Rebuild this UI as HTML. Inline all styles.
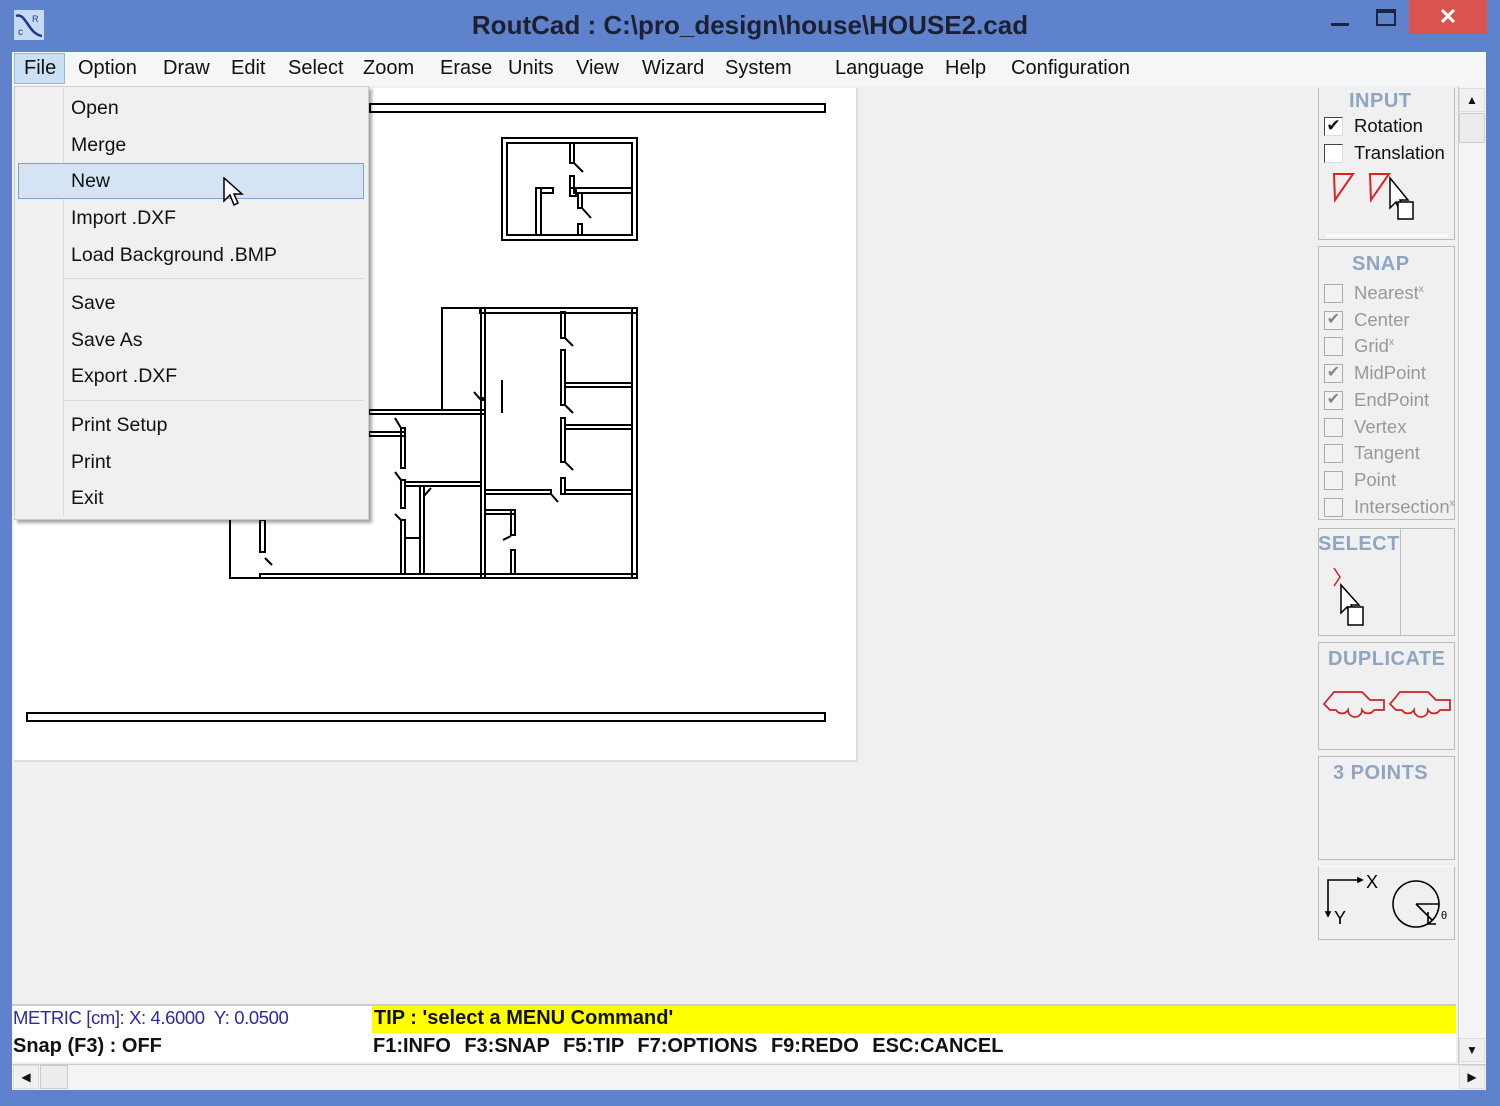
<!DOCTYPE html>
<html><head><meta charset="utf-8"><style>
*{margin:0;padding:0;box-sizing:border-box}
body{width:1500px;height:1106px;background:#5e83cc;position:relative;overflow:hidden;font-family:"Liberation Sans",sans-serif;color:#111}
.a{position:absolute}
.mb span{position:absolute;top:57px;font-size:20px;color:#111}
.mi{position:absolute;left:71px;font-size:19.5px;color:#111}
.h{position:absolute;font-weight:bold;font-size:20px;color:#8fa6c2;letter-spacing:0.5px}
.cb{position:absolute;left:1324px;width:19px;height:19px;border:1px solid #444;border-right-color:#ddd;border-bottom-color:#ddd;background:#fff}
.cb.g{border-color:#aaa;background:#f2f2f2}
.cl{position:absolute;left:1354px;font-size:18.5px}
.cl.g{color:#999}
.st{font-family:"Liberation Sans Narrow","Liberation Sans",sans-serif;font-weight:bold;font-size:20px;position:absolute}
</style></head><body>
<svg class="a" style="left:14px;top:10px" width="30" height="30" viewBox="0 0 30 30"><rect width="30" height="30" fill="#c8daf2"/><path d="M2 6 C12 2,14 24,28 26" stroke="#1b3a8a" stroke-width="2.5" fill="none"/><text x="4" y="25" font-size="10" fill="#1b3a8a" font-family="Liberation Sans">c</text><text x="18" y="12" font-size="9" fill="#1b3a8a" font-family="Liberation Sans">R</text></svg>
<div class="a" style="left:0;width:1500px;top:10px;text-align:center;font-weight:bold;font-size:26px;color:#1c2030">RoutCad : C:\pro_design\house\HOUSE2.cad</div>
<div class="a" style="left:1331px;top:23px;width:18px;height:3px;background:#1c2540"></div>
<div class="a" style="left:1376px;top:9px;width:20px;height:17px;border:2px solid #1c2540;border-top-width:4px"></div>
<div class="a" style="left:1409px;top:0;width:78px;height:34px;background:#d9534f;color:#fff;text-align:center;font-weight:bold;font-size:22px;line-height:34px">✕</div>
<div class="a" style="left:12px;top:52px;width:1474px;height:34px;background:#f5f6f7"></div>
<div class="a" style="left:14px;top:53px;width:51px;height:31px;background:#cce0f5;border:1px solid #8fb6e0"></div>
<div class="mb"><span style="left:24px">File</span><span style="left:78px">Option</span><span style="left:163px">Draw</span><span style="left:231px">Edit</span><span style="left:288px">Select</span><span style="left:363px">Zoom</span><span style="left:440px">Erase</span><span style="left:508px">Units</span><span style="left:576px">View</span><span style="left:642px">Wizard</span><span style="left:725px">System</span><span style="left:835px">Language</span><span style="left:945px">Help</span><span style="left:1011px">Configuration</span></div>
<div class="a" style="left:12px;top:86px;width:1446px;height:978px;background:#f0f0f0"></div>
<div class="a" style="left:14px;top:88px;width:844px;height:674px;background:#fff;border-right:2px solid #ddd;border-bottom:2px solid #ddd"></div>
<svg class="a" style="left:0;top:0" width="1500" height="1106" fill="none" stroke="#000" stroke-width="2">
<rect x="370" y="104" width="455" height="8" fill="#fff"/>
<rect x="27" y="713" width="798" height="8" fill="#fff"/>
<rect x="502" y="138" width="135" height="102"/><rect x="507" y="143" width="125" height="92"/>
<rect x="570" y="143" width="4" height="20"/><rect x="570" y="176" width="4" height="12"/>
<rect x="574" y="188" width="58" height="5"/><rect x="570" y="188" width="6" height="8"/>
<rect x="578" y="193" width="4" height="15"/><rect x="578" y="224" width="4" height="11"/>
<rect x="536" y="188" width="5" height="47"/><rect x="541" y="188" width="12" height="5"/>
<path d="M574 163 L583 172 M582 208 L591 218"/>
<path d="M442 410 V308 H480"/>
<rect x="480" y="308" width="157" height="5"/><rect x="632" y="308" width="5" height="270"/>
<rect x="260" y="574" width="377" height="4"/><path d="M230 520 V578 H260"/>
<rect x="369" y="410" width="116" height="4"/><rect x="369" y="432" width="36" height="4"/>
<rect x="481" y="308" width="4" height="90"/><rect x="481" y="400" width="4" height="178"/>
<path d="M502 380 V413 M474 392 L481 400"/>
<rect x="561" y="312" width="4" height="26"/><rect x="561" y="350" width="4" height="55"/><rect x="561" y="418" width="4" height="44"/><rect x="561" y="478" width="4" height="16"/>
<rect x="565" y="383" width="67" height="4"/><rect x="565" y="425" width="67" height="4"/><rect x="565" y="490" width="67" height="4"/>
<rect x="485" y="490" width="66" height="4"/>
<path d="M565 338 L573 346 M565 405 L573 413 M565 462 L573 470 M551 494 L558 502"/>
<rect x="401" y="428" width="4" height="40"/><rect x="401" y="480" width="4" height="28"/><rect x="401" y="520" width="4" height="54"/>
<rect x="405" y="482" width="76" height="4"/><rect x="420" y="486" width="4" height="88"/><path d="M405 538 H420 M395 418 L401 428 M395 472 L401 480 M395 514 L401 520 M424 496 L431 488"/>
<rect x="485" y="510" width="30" height="4"/><rect x="511" y="510" width="4" height="25"/><rect x="511" y="550" width="4" height="24"/><path d="M503 540 L511 536"/>
<rect x="260" y="520" width="5" height="32"/><path d="M265 558 L272 565"/>
</svg>
<div class="a" style="left:14px;top:86px;width:355px;height:434px;background:#f0f0f0;border:1px solid #ccc;box-shadow:3px 3px 3px rgba(0,0,0,.35)"></div>
<div class="a" style="left:63px;top:88px;width:1px;height:428px;background:#dadada"></div>
<div class="a" style="left:64px;top:278px;width:300px;height:1px;background:#d8d8d8"></div>
<div class="a" style="left:64px;top:400px;width:300px;height:1px;background:#d8d8d8"></div>
<div class="a" style="left:18px;top:163px;width:346px;height:36px;background:#d5e4f5;border:1px solid #7da2ce"></div>
<div class="mi" style="top:97px">Open</div><div class="mi" style="top:134px">Merge</div><div class="mi" style="top:170px">New</div><div class="mi" style="top:207px">Import .DXF</div><div class="mi" style="top:244px">Load Background .BMP</div><div class="mi" style="top:292px">Save</div><div class="mi" style="top:329px">Save As</div><div class="mi" style="top:365px">Export .DXF</div><div class="mi" style="top:414px">Print Setup</div><div class="mi" style="top:451px">Print</div><div class="mi" style="top:487px">Exit</div>
<svg class="a" style="left:223px;top:177px" width="24" height="34"><path d="M1 1 V24 L7 18 L11 28 L15 26 L11 17 H19 Z" fill="#fff" stroke="#000" stroke-width="1.5"/></svg>
<div class="a" style="left:1318px;top:88px;width:137px;height:152px;border:1px solid #bbb;border-top:none"></div>
<div class="a" style="left:1326px;top:234px;width:122px;height:3px;background:#fff"></div>
<div class="h" style="left:1349px;top:90px">INPUT</div>
<div class="cb" style="top:117px;font-size:17px;line-height:16px;text-align:center">✔</div><div class="cl" style="top:115px">Rotation</div>
<div class="cb" style="top:144px"></div><div class="cl" style="top:142px">Translation</div>
<svg class="a" style="left:1328px;top:170px" width="95" height="55" fill="none" stroke-width="2"><path d="M6 4 H25 L7 30 Z" stroke="#d22"/><path d="M42 4 H61 L43 30 Z" stroke="#d22"/><path d="M62 8 V38 L68 32 L72 42 L76 40 L72 30 H80 Z" fill="#fff" stroke="#000" stroke-width="1.5"/><rect x="70" y="32" width="15" height="17" fill="#fff" stroke="#000" stroke-width="1.5"/></svg>
<div class="a" style="left:1318px;top:246px;width:137px;height:274px;border:1px solid #bbb"></div>
<div class="h" style="left:1352px;top:253px">SNAP</div>
<div class="cb g" style="top:284px"></div><div class="cl g" style="top:282px">Nearest<sup style="font-size:10px">x</sup></div>
<div class="cb g" style="top:311px;color:#888;font-size:16px;line-height:16px;text-align:center">✔</div><div class="cl g" style="top:309px">Center</div>
<div class="cb g" style="top:337px"></div><div class="cl g" style="top:335px">Grid<sup style="font-size:10px">x</sup></div>
<div class="cb g" style="top:364px;color:#888;font-size:16px;line-height:16px;text-align:center">✔</div><div class="cl g" style="top:362px">MidPoint</div>
<div class="cb g" style="top:391px;color:#888;font-size:16px;line-height:16px;text-align:center">✔</div><div class="cl g" style="top:389px">EndPoint</div>
<div class="cb g" style="top:418px"></div><div class="cl g" style="top:416px">Vertex</div>
<div class="cb g" style="top:444px"></div><div class="cl g" style="top:442px">Tangent</div>
<div class="cb g" style="top:471px"></div><div class="cl g" style="top:469px">Point</div>
<div class="cb g" style="top:498px"></div><div class="cl g" style="top:496px">Intersection<sup style="font-size:10px">x</sup></div>
<div class="a" style="left:1318px;top:528px;width:137px;height:108px;border:1px solid #bbb"></div>
<div class="a" style="left:1400px;top:528px;width:1px;height:108px;background:#bbb"></div>
<div class="h" style="left:1318px;top:533px">SELECT</div>
<svg class="a" style="left:1330px;top:565px" width="40" height="65" fill="none" stroke-width="1.5"><path d="M4 3 L10 12 L4 21" stroke="#c22"/><path d="M11 20 V48 L17 42 L21 52 L25 50 L21 40 H29 Z" fill="#fff" stroke="#000"/><rect x="18" y="42" width="15" height="18" fill="#fff" stroke="#000"/></svg>
<div class="a" style="left:1318px;top:642px;width:137px;height:108px;border:1px solid #bbb"></div>
<div class="h" style="left:1328px;top:648px">DUPLICATE</div>
<svg class="a" style="left:1322px;top:688px" width="132" height="36" fill="none" stroke="#c22" stroke-width="1.7"><path d="M2 16 L12 4 H40 L48 12 H62 V22 H52 A7 7 0 0 1 40 22 A7 7 0 0 1 26 22 A7 7 0 0 1 14 22 H8 Z"/><path d="M68 16 L78 4 H106 L114 12 H128 V22 H118 A7 7 0 0 1 106 22 A7 7 0 0 1 92 22 A7 7 0 0 1 80 22 H74 Z"/></svg>
<div class="a" style="left:1318px;top:756px;width:137px;height:104px;border:1px solid #bbb"></div>
<div class="h" style="left:1333px;top:762px">3 POINTS</div>
<div class="a" style="left:1318px;top:866px;width:137px;height:74px;border:1px solid #bbb;border-top-color:#fff"></div>
<svg class="a" style="left:1320px;top:868px" width="134" height="64" fill="none" stroke="#000" stroke-width="1.6"><path d="M8 44 V12 H38"/><path d="M38 10 L42 12 L38 14Z M6 44 L8 48 L10 44Z" fill="#000"/><text x="46" y="20" font-size="18" fill="#000" stroke="none" font-family="Liberation Sans">X</text><text x="14" y="56" font-size="18" fill="#000" stroke="none" font-family="Liberation Sans">Y</text><circle cx="96" cy="36" r="23"/><path d="M96 36 H119 M96 36 L112 52 M108 44 V56 H116"/><text x="121" y="51" font-size="11" fill="#000" stroke="none" font-family="Liberation Sans">θ</text></svg>
<div class="a" style="left:1458px;top:86px;width:28px;height:978px;background:#f4f4f4;border-left:1px solid #ccc"></div>
<div class="a" style="left:1459px;top:88px;width:26px;height:24px;background:#f0f0f0;border:1px solid #ddd;text-align:center;font-size:12px;line-height:22px">▲</div>
<div class="a" style="left:1459px;top:113px;width:26px;height:30px;background:#ececec;border:1px solid #ccc"></div>
<div class="a" style="left:1459px;top:1038px;width:26px;height:24px;background:#f0f0f0;border:1px solid #ddd;text-align:center;font-size:12px;line-height:22px">▼</div>
<div class="a" style="left:12px;top:1004px;width:1444px;height:58px;background:#fff;border-top:2px solid #ccc"></div>
<div class="a" style="left:372px;top:1006px;width:1084px;height:27px;background:#ffff00"></div>
<div class="a" style="left:13px;top:1007px;font-size:18.5px;letter-spacing:-0.4px;color:#2a2aa8;font-family:'Liberation Sans Narrow','Liberation Sans',sans-serif">METRIC [cm]: X: 4.6000&nbsp; Y: 0.0500</div>
<div class="st" style="left:13px;top:1035px">Snap (F3) : OFF</div>
<div class="st" style="left:374px;top:1007px">TIP : 'select a MENU Command'</div>
<div class="st" style="left:373px;top:1035px;word-spacing:8px">F1:INFO F3:SNAP F5:TIP F7:OPTIONS F9:REDO ESC:CANCEL</div>
<div class="a" style="left:12px;top:1064px;width:1474px;height:26px;background:#f4f4f4;border-top:1px solid #ccc"></div>
<div class="a" style="left:13px;top:1065px;width:26px;height:24px;background:#f0f0f0;border:1px solid #ddd;text-align:center;font-size:12px;line-height:22px">◀</div>
<div class="a" style="left:40px;top:1065px;width:28px;height:24px;background:#ececec;border:1px solid #ccc"></div>
<div class="a" style="left:1459px;top:1065px;width:26px;height:24px;background:#f0f0f0;border:1px solid #ddd;text-align:center;font-size:12px;line-height:22px">▶</div>
</body></html>
